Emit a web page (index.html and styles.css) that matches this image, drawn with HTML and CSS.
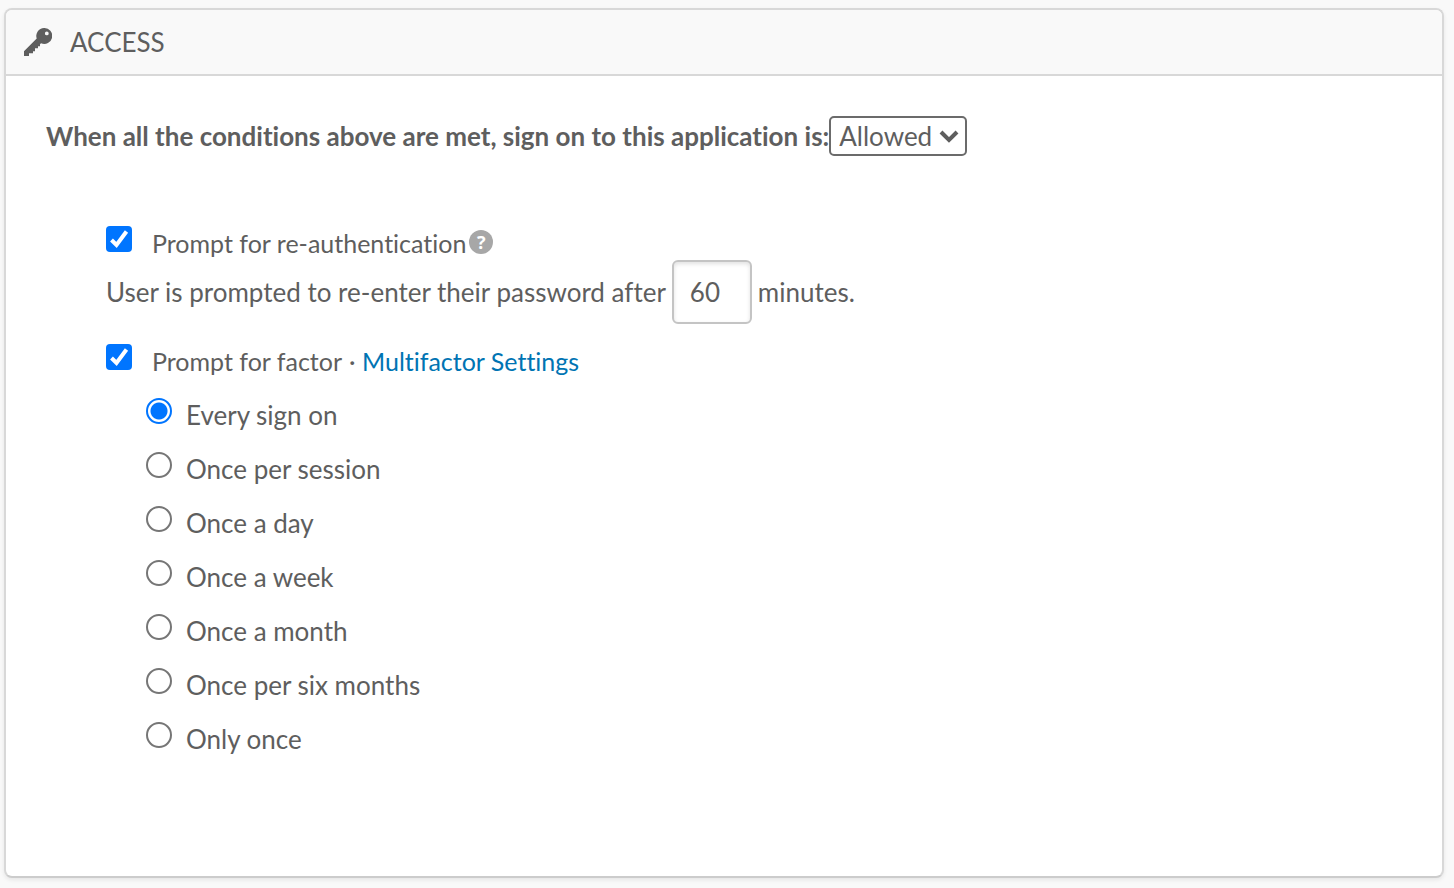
FILE: index.html
```html
<!DOCTYPE html>
<html lang="en">
<head>
<meta charset="utf-8">
<meta name="viewport" content="width=device-width, initial-scale=1">
<title>Access</title>
<link rel="stylesheet" href="styles.css">
</head>
<body>
<section class="card">
  <header class="card-header">
    <svg class="key-icon" viewBox="0 0 28 28" aria-hidden="true">
      <path fill="currentColor" fill-rule="evenodd" d="M20 0a8 8 0 1 1-3 15.300l-1 1v2h-2v2h-3v3H9v2H5v3H0v-5L12.700 10.600A8 8 0 0 1 20 0zm2.800 3.500a1.900 1.900 0 1 0 0 3.800a1.900 1.900 0 0 0 0-3.800z"/>
    </svg>
    <h1 class="card-title">ACCESS</h1>
  </header>
  <form class="card-body">
    <div class="rule">
      <label class="rule-label" for="access">When all the conditions above are met, sign on to this application is:</label>
      <span class="select-wrap">
        <select class="select" id="access"><option>Allowed</option><option>Denied</option></select>
        <svg class="chevron" viewBox="0 0 20 13" aria-hidden="true"><path d="M2 2l8 8 8-8" fill="none" stroke="currentColor" stroke-width="4"/></svg>
      </span>
    </div>
    <div class="options">
      <div class="check-row">
        <input class="check" type="checkbox" id="reauth" checked>
        <label for="reauth">Prompt for re-authentication</label>
        <button class="help" type="button" aria-label="Help">?</button>
      </div>
      <div class="timeout-row">
        <label for="minutes">User is prompted to re-enter their password after</label>
        <input class="minutes" type="text" id="minutes" value="60">
        <span>minutes.</span>
      </div>
      <div class="check-row">
        <input class="check" type="checkbox" id="factor" checked>
        <label for="factor">Prompt for factor</label>
        <span class="link-part">· <a class="link" href="#">Multifactor Settings</a></span>
      </div>
      <div class="radios">
        <div class="radio-row"><input class="radio" type="radio" name="freq" id="f1" checked><label for="f1">Every sign on</label></div>
        <div class="radio-row"><input class="radio" type="radio" name="freq" id="f2"><label for="f2">Once per session</label></div>
        <div class="radio-row"><input class="radio" type="radio" name="freq" id="f3"><label for="f3">Once a day</label></div>
        <div class="radio-row"><input class="radio" type="radio" name="freq" id="f4"><label for="f4">Once a week</label></div>
        <div class="radio-row"><input class="radio" type="radio" name="freq" id="f5"><label for="f5">Once a month</label></div>
        <div class="radio-row"><input class="radio" type="radio" name="freq" id="f6"><label for="f6">Once per six months</label></div>
        <div class="radio-row"><input class="radio" type="radio" name="freq" id="f7"><label for="f7">Only once</label></div>
      </div>
    </div>
  </form>
</section>
</body>
</html>
```
FILE: styles.css
```css
* {
  box-sizing: border-box;
}

body {
  margin: 0;
  padding: 8px 10px 10px 4px;
  background: #f9f9f9;
  color: #5e5e5e;
  font-family: Lato, "Open Sans", sans-serif;
  font-size: 26px;
  font-variant-ligatures: none;
  line-height: 32px;
}

.card {
  overflow: hidden;
  background: #fff;
  border: 2px solid #d8d8d8;
  border-bottom-color: #ccc;
  border-radius: 8px;
  box-shadow: 0 2px 4px rgba(0, 0, 0, 0.08);
}

.card-header {
  display: flex;
  align-items: center;
  gap: 18px;
  padding: 16px 18px;
  background: #f9f9f9;
  border-bottom: 2px solid #d8d8d8;
}

.key-icon {
  width: 28px;
  height: 28px;
}

.card-title {
  margin: 0;
  font-size: 26px;
  font-weight: 400;
}

.card-body {
  padding: 40px 40px 120px;
}

.rule {
  display: flex;
  align-items: center;
}

.rule-label {
  font-weight: 700;
}

.select-wrap {
  position: relative;
}

.select {
  display: block;
  width: 138px;
  height: 40px;
  padding: 0 8px;
  appearance: none;
  background: #fff;
  border: 2px solid #6b6b6b;
  border-radius: 5px;
  color: inherit;
  font: inherit;
}

.chevron {
  position: absolute;
  top: 14px;
  right: 8px;
  width: 20px;
  height: 13px;
  pointer-events: none;
}

.options {
  padding: 70px 60px 0;
}

.check-row,
.radio-row {
  display: flex;
  align-items: center;
  height: 34px;
}

.check-row {
  font-size: 25px;
}

.check,
.radio {
  appearance: none;
  flex: none;
  width: 26px;
  height: 26px;
  margin: 0 20px 8px 0;
}

.check {
  border-radius: 4px;
}

.check:checked {
  background: #0075ff url("data:image/svg+xml,%3Csvg xmlns='http://www.w3.org/2000/svg' viewBox='0 0 26 26'%3E%3Cpath d='M5.500 14l5 5L20.500 5.500' fill='none' stroke='white' stroke-width='4'/%3E%3C/svg%3E");
}

.radio {
  margin-right: 14px;
  border: 2px solid #767676;
  border-radius: 50%;
}

.radio:checked {
  border-color: #0075ff;
  background: radial-gradient(circle, #0075ff 8px, #fff 9px);
}

.help {
  width: 24px;
  height: 24px;
  margin: 0 0 2px 3px;
  padding: 0;
  border: 0;
  border-radius: 50%;
  background: #a7a7a7;
  color: #fff;
  font: 700 18px/24px "Open Sans", sans-serif;
}

.timeout-row {
  display: flex;
  align-items: center;
  gap: 6px;
  margin-bottom: 20px;
}

.minutes {
  width: 80px;
  height: 64px;
  padding: 0 16px;
  border: 2px solid #c4c4c4;
  border-radius: 6px;
  box-shadow: inset 0 2px 4px rgba(0, 0, 0, 0.12);
  color: inherit;
  font: inherit;
}

.link-part {
  margin-left: 7px;
}

.link {
  color: #0074b3;
  text-decoration: none;
}

.radios {
  display: grid;
  gap: 20px;
  padding: 20px 40px 0;
}
```
